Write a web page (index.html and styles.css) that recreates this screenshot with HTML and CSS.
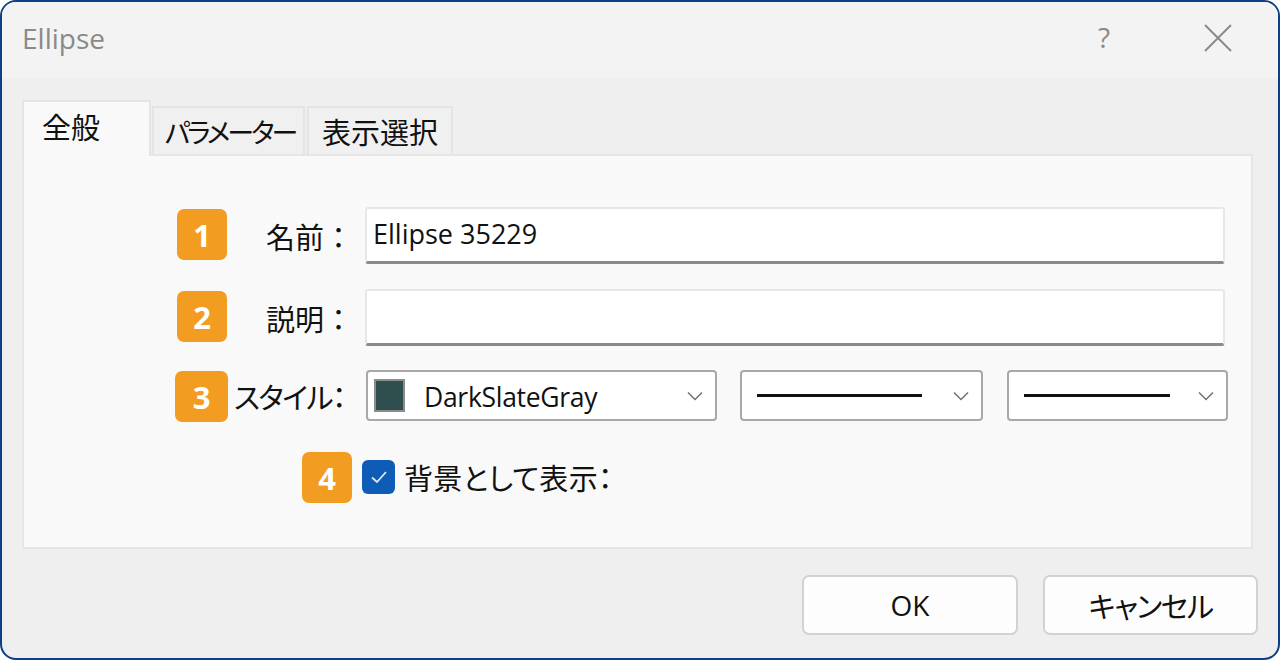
FILE: index.html
```html
<!DOCTYPE html>
<html lang="ja">
<head>
<meta charset="utf-8">
<title>Ellipse</title>
<link rel="stylesheet" href="styles.css">
</head>
<body>
<div class="window">
  <div class="titlebar">
    <span class="title">Ellipse</span>
    <span class="help">?</span>
    <svg class="close" width="28" height="28" viewBox="0 0 28 28"><path d="M1 1 L27 27 M27 1 L1 27" stroke="#8a8a8a" stroke-width="2" fill="none"/></svg>
  </div>
  <div class="content">
    <div class="tabs">
      <div class="tab active">全般</div>
      <div class="tab tab-kana">パラメーター</div>
      <div class="tab tab-kanji">表示選択</div>
    </div>
    <div class="panel">
      <div class="row row1">
        <span class="badge b1">1</span>
        <label class="label">名前：</label>
        <div class="input"><span class="val">Ellipse 35229</span></div>
      </div>
      <div class="row row2">
        <span class="badge b2">2</span>
        <label class="label">説明：</label>
        <div class="input"></div>
      </div>
      <div class="row row3">
        <span class="badge b3">3</span>
        <label class="label kana">スタイル：</label>
        <div class="selects">
          <div class="select s1">
            <span class="swatch"></span>
            <span class="sel-text">DarkSlateGray</span>
            <svg class="chev" width="16" height="10" viewBox="0 0 16 10"><path d="M1 1.5 L8 8.5 L15 1.5" stroke="#707070" stroke-width="1.5" fill="none"/></svg>
          </div>
          <div class="select s2">
            <span class="line l2"></span>
            <svg class="chev" width="16" height="10" viewBox="0 0 16 10"><path d="M1 1.5 L8 8.5 L15 1.5" stroke="#707070" stroke-width="1.5" fill="none"/></svg>
          </div>
          <div class="select s3">
            <span class="line l3"></span>
            <svg class="chev" width="16" height="10" viewBox="0 0 16 10"><path d="M1 1.5 L8 8.5 L15 1.5" stroke="#707070" stroke-width="1.5" fill="none"/></svg>
          </div>
        </div>
      </div>
      <div class="row row4">
        <span class="badge b4">4</span>
        <span class="label"></span>
        <div class="check-wrap">
          <span class="checkbox"><svg width="20" height="16" viewBox="0 0 20 16"><path d="M3 8.5 L8 13 L17 3" stroke="#dfe9f7" stroke-width="1.8" fill="none"/></svg></span>
          <span class="check-label">背景として表示：</span>
        </div>
      </div>
    </div>
    <div class="buttons">
      <button class="btn">OK</button>
      <button class="btn kana">キャンセル</button>
    </div>
  </div>
</div>
</body>
</html>
```

FILE: styles.css
```css
html, body {
  margin: 0;
  padding: 0;
  background: #ffffff;
}
body {
  font-family: "Noto Sans", "Noto Sans CJK JP", sans-serif;
  color: #111;
}
.window {
  width: 1280px;
  height: 660px;
  box-sizing: border-box;
  border: 2px solid #0c3f86;
  border-radius: 16px;
  background: #efefef;
  overflow: hidden;
  display: flex;
  flex-direction: column;
}
.titlebar {
  height: 76px;
  background: #f3f3f3;
  display: flex;
  align-items: center;
  padding: 0 46px 0 20px;
  flex-shrink: 0;
}
.title {
  font-family: "Open Sans", "Noto Sans", sans-serif;
  font-size: 28px;
  color: #8a8a8a;
  flex: 1;
  margin-top: -4px;
}
.help {
  font-family: "Open Sans", "Noto Sans", sans-serif;
  font-size: 28px;
  color: #8a8a8a;
  margin-right: 94px;
  margin-top: -6px;
}
.close {
  margin-top: -4px;
}
.content {
  padding: 22px 23px 0 20px;
  display: flex;
  flex-direction: column;
}
.tabs {
  display: flex;
  align-items: flex-end;
  height: 56px;
  position: relative;
  z-index: 2;
  margin-bottom: -2px;
}
.tab {
  font-family: "Noto Sans CJK JP", sans-serif;
  font-size: 29px;
  height: 48px;
  box-sizing: border-box;
  border: 2px solid #e4e4e4;
  border-bottom: none;
  background: #f0f0f0;
  padding: 0 10px;
  display: flex;
  align-items: center;
  margin-right: 2px;
  margin-bottom: 2px;
  white-space: nowrap;
}
.tab.active {
  width: 129px;
  height: 56px;
  background: #f9f9f9;
  padding: 0 18px 6px;
  margin-bottom: 0;
  margin-right: 1px;
}
.tab-kana {
  font-size: 27px;
  font-feature-settings: "palt";
  letter-spacing: -3px;
  width: 153px;
  justify-content: center;
  padding: 0 0 0 3px;
}
.tab-kanji {
  width: 146px;
  justify-content: center;
  padding: 0;
}
.panel {
  height: 395px;
  box-sizing: border-box;
  background: #f9f9f9;
  border: 2px solid #e6e6e6;
  padding-top: 51px;
  margin-right: 2px;
}
.row {
  display: flex;
  align-items: center;
  position: relative;
}
.row1 { height: 57px; }
.row2 { height: 57px; margin-top: 25px; }
.row3 { height: 51px; margin-top: 24px; }
.row4 { height: 51px; margin-top: 30px; }
.badge {
  position: absolute;
  width: 50px;
  height: 51px;
  border-radius: 7px;
  background: #f39c22;
  color: #fff;
  font-family: "Open Sans", "Noto Sans", sans-serif;
  font-weight: 700;
  font-size: 31px;
  display: flex;
  align-items: center;
  justify-content: center;
  top: 0;
}
.b1 { left: 153px; top: 2px; }
.b2 { left: 153px; top: 2px; }
.b3 { left: 151px; width: 53px; top: 1px; }
.b4 { left: 278px; top: 1px; }
.label {
  font-family: "Noto Sans CJK JP", sans-serif;
  font-size: 29px;
  width: 341px;
  box-sizing: border-box;
  text-align: right;
  padding-right: 12px;
  flex-shrink: 0;
  position: relative;
  z-index: 1;
  white-space: nowrap;
}
.label.kana {
  font-feature-settings: "palt";
  letter-spacing: -1.5px;
  padding-right: 20px;
}
.input {
  width: 860px;
  height: 57px;
  box-sizing: border-box;
  background: #fff;
  border: 2px solid #e7e7e7;
  border-bottom: 3px solid #8a8a8a;
  border-radius: 3px;
  display: flex;
  align-items: center;
  padding-left: 6px;
}
.val {
  font-family: "Open Sans", "Noto Sans", sans-serif;
  font-size: 27px;
  color: #111;
  margin-top: -4px;
}
.selects {
  display: flex;
  gap: 23px;
  margin-left: 1px;
}
.select {
  height: 51px;
  box-sizing: border-box;
  background: #fff;
  border: 2px solid #a8a8a8;
  border-radius: 4px;
  display: flex;
  align-items: center;
  padding-right: 12px;
}
.s1 { width: 351px; padding-left: 6px; }
.s2 { width: 243px; padding-left: 15px; }
.s3 { width: 221px; padding-left: 15px; margin-left: 1px; }
.swatch {
  width: 31px;
  height: 33px;
  box-sizing: border-box;
  background: #2f4f4f;
  border: 2px solid #8c8c8c;
  flex-shrink: 0;
}
.sel-text {
  font-family: "Open Sans", "Noto Sans", sans-serif;
  font-size: 26.5px;
  margin-left: 19px;
  flex: 1;
  margin-top: 2px;
  letter-spacing: -0.3px;
}
.line {
  height: 3px;
  background: #111;
  display: block;
}
.l2 { width: 165px; }
.l3 { width: 146px; }
.chev { margin-left: auto; }
.check-wrap {
  display: flex;
  align-items: center;
  margin-left: -3px;
}
.checkbox {
  width: 33px;
  height: 34px;
  box-sizing: border-box;
  background: #0d5cb6;
  border-radius: 6px;
  display: flex;
  align-items: center;
  justify-content: center;
}
.check-label {
  font-family: "Noto Sans CJK JP", sans-serif;
  font-feature-settings: "palt";
  font-size: 29px;
  margin-left: 9px;
  letter-spacing: 0.3px;
}
.buttons {
  display: flex;
  justify-content: flex-end;
  gap: 25px;
  margin-top: 26px;
  margin-right: -3px;
}
.btn {
  width: 216px;
  height: 60px;
  background: #fdfdfd;
  border: 2px solid #d2d2d2;
  border-radius: 7px;
  font-family: "Open Sans", "Noto Sans", sans-serif;
  font-size: 28px;
  color: #111;
  padding: 0;
}
.btn.kana {
  font-family: "Noto Sans CJK JP", sans-serif;
  font-feature-settings: "palt";
  font-size: 29px;
  letter-spacing: -1.5px;
  width: 215px;
}
```
